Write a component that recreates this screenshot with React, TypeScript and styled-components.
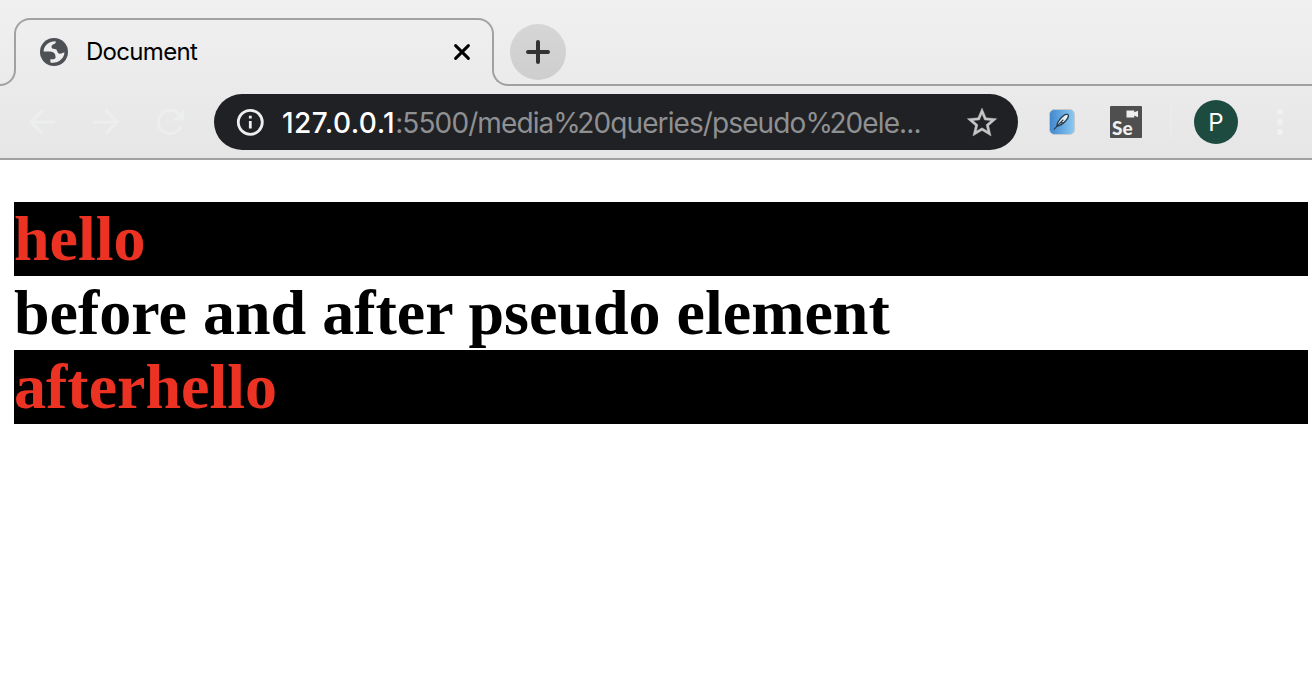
import React from 'react';
import styled, { createGlobalStyle } from 'styled-components';

const line = '#a1a1a1';

const GlobalStyle = createGlobalStyle`
  * { box-sizing: border-box; }
  body { margin: 0; background: #fff; overflow: hidden; }
`;

const Window = styled.div`
  width: 1312px;
  height: 676px;
  background: #fff;
`;

const Chrome = styled.header`
  height: 160px;
  border-bottom: 2px solid ${line};
  background: linear-gradient(#f0f0f0, #e6e6e6);
  font-family: Inter, 'Liberation Sans', sans-serif;
`;

const TabStrip = styled.div`
  display: flex;
  align-items: flex-end;
  height: 86px;
`;

const LeftFoot = styled.div`
  width: 16px;
  height: 34px;
  margin-right: -2px;
  border: solid ${line};
  border-width: 0 2px 2px 0;
  border-bottom-right-radius: 16px;
`;

const Tab = styled.div`
  position: relative;
  display: flex;
  align-items: center;
  width: 480px;
  height: 68px;
  padding: 0 22px 0 26px;
  &::before {
    content: '';
    position: absolute;
    inset: 0 0 34px;
    border: 2px solid ${line};
    border-bottom: 0;
    border-radius: 16px 16px 0 0;
  }
`;

const TabTitle = styled.span`
  flex: 1;
  margin-left: 18px;
  font-size: 24px;
  line-height: 30px;
  letter-spacing: -0.7px;
  color: #000;
`;

const StripRest = styled.div`
  position: relative;
  flex: 1;
  height: 68px;
  margin-left: -2px;
  padding: 6px 0 0 18px;
  &::after {
    content: '';
    position: absolute;
    inset: 34px 0 0;
    border: solid ${line};
    border-width: 0 0 2px 2px;
    border-bottom-left-radius: 16px;
    pointer-events: none;
  }
`;

const NewTab = styled.div`
  display: grid;
  place-items: center;
  width: 56px;
  height: 56px;
  border-radius: 50%;
  background: linear-gradient(#d6d6d6, #cecece);
`;

const Toolbar = styled.div`
  display: flex;
  align-items: center;
  height: 72px;
  padding-left: 28px;
`;

const NavIcons = styled.div`
  display: flex;
  gap: 36px;
  width: 186px;
`;

const Address = styled.div`
  display: flex;
  align-items: center;
  width: 804px;
  height: 56px;
  padding: 0 21px 0 22px;
  border-radius: 28px;
  background: #202124;
`;

const Url = styled.span`
  flex: 1;
  margin-left: 18px;
  padding-top: 1px;
  font-size: 28px;
  line-height: 34px;
  letter-spacing: -0.9px;
  white-space: nowrap;
  color: #8f9092;
`;

const Host = styled.span`
  font-weight: 500;
  letter-spacing: 0.45px;
  color: #fff;
`;

const Percent = styled.span`
  letter-spacing: -3.5px;
`;

const Extensions = styled.div`
  display: flex;
  align-items: center;
  margin-left: 30px;
`;

const SeBadge = styled.div`
  display: flex;
  flex-direction: column;
  width: 32px;
  height: 32px;
  margin-left: 34px;
  padding: 4px 4px 0 2px;
  border-radius: 1px;
  background: #4f4f4f;
  svg { flex: none; align-self: flex-end; }
`;

const SeText = styled.span`
  font: 900 19px/20px Lato, sans-serif;
  color: #f0f0f0;
`;

const Divider = styled.div`
  width: 2px;
  height: 32px;
  margin: 0 22px 0 28px;
  background: #e9ebec;
`;

const Avatar = styled.div`
  display: grid;
  place-items: center;
  width: 44px;
  height: 44px;
  padding-top: 1px;
  border-radius: 50%;
  background: #1e4b40;
  color: #fff;
  font-size: 24px;
  line-height: 43px;
`;

const Dots = styled.div`
  display: grid;
  gap: 4px;
  margin-left: 39px;
`;

const Dot = styled.span`
  width: 6px;
  height: 6px;
  border-radius: 50%;
  background: #eff1f3;
`;

const Page = styled.main`
  padding: 42px 4px 0 14px;
`;

const Heading = styled.h1`
  margin: 0;
  font: bold 64px/74px 'Liberation Serif', 'Times New Roman', serif;
  color: #000;
`;

const Pseudo = styled.span`
  display: block;
  background: #000;
  color: #ec3323;
`;

const Globe = () => (
  <svg width="28" height="28" viewBox="0 0 28 28">
    <circle cx="14" cy="14" r="14" fill="#4d5156" />
    <path
      fill="#eee"
      d="M3.600 13.500C3.800 7.600 8.500 3.400 15.600 3.300c.5 1.700-.4 2.500-2 3-1.700.7-2.300 1.800-2 3.300.5 1.600 2.300 1.500 4.200 1.600 1.300.2 1.400 3.200 3 4.200 1.600.8 3.600-.5 5.600-1.200C24.600 20.500 17.500 26 10.400 24.500v-3.300h3c1.400-.2 2.200-1 2.200-2.300 0-3.300-2-5.200-5.200-5.400z"
    />
  </svg>
);

const Close = () => (
  <svg width="20" height="20" viewBox="0 0 20 20" stroke="#000" strokeWidth="3" strokeLinecap="round">
    <path d="M3.600 3.600l12.800 12.800M16.400 3.600L3.600 16.400" />
  </svg>
);

const Plus = () => (
  <svg width="24" height="24" viewBox="0 0 24 24" stroke="#333" strokeWidth="4" strokeLinecap="round">
    <path d="M12 2v20M2 12h20" />
  </svg>
);

const Arrow = ({ forward }: { forward?: boolean }) => (
  <svg width="28" height="28" viewBox="0 0 28 28" fill="none" stroke="#edefef" strokeWidth="2.6">
    {forward ? <path d="M1 14h24M13.500 2.200L25.300 14 13.500 25.800" /> : <path d="M27 14H3M14.500 2.200L2.700 14l11.800 11.800" />}
  </svg>
);

const Reload = () => (
  <svg width="28" height="28" viewBox="0 0 28 28">
    <path d="M23 6.200A11.800 11.800 0 1 0 25.200 18" fill="none" stroke="#edefef" strokeWidth="2.600" />
    <path d="M28 1v11.500H16.500z" fill="#edefef" />
  </svg>
);

const Info = () => (
  <svg width="28" height="28" viewBox="0 0 28 28">
    <circle cx="14.300" cy="14.300" r="12" fill="none" stroke="#eee" strokeWidth="2.800" />
    <path fill="#eee" d="M12.900 7.800h2.800v2.800h-2.800zM12.900 13h2.800v7.600h-2.800z" />
  </svg>
);

const Star = () => (
  <svg width="30" height="30" viewBox="0 0 24 24">
    <path
      fill="#c6c6c6"
      stroke="#c6c6c6"
      strokeWidth=".25"
      d="M22 9.240l-7.190-.62L12 2 9.190 8.630 2 9.240l5.460 4.730L5.820 21 12 17.270 18.180 21l-1.630-7.030L22 9.240zM12 15.400l-3.760 2.270 1-4.280-3.320-2.880 4.380-.38L12 6.100l1.710 4.040 4.380.38-3.320 2.880 1 4.280L12 15.400z"
      transform="translate(-2.160 -1.570) scale(1.180)"
    />
  </svg>
);

const Feather = () => (
  <svg width="28" height="28" viewBox="0 0 28 28">
    <defs>
      <linearGradient id="sky" x2="1">
        <stop stopColor="#3f87cf" />
        <stop offset="1" stopColor="#8ccaf0" />
      </linearGradient>
    </defs>
    <rect x="1.500" y="1.500" width="25" height="25" rx="5" fill="url(#sky)" stroke="#c4c9cd" />
    <path d="M9 18c-.2-3.600 2-6 5-9 2.200-2.200 4.600-3.500 5.800-2.500 1.300 1.100.4 3.500-1.800 6-2.300 2.500-5.300 5.300-9 5.500z" fill="#e4eff4" stroke="#253c4c" strokeWidth="1.300" />
    <path d="M6.200 21.200L15 12M12.500 15l3.200-.3" fill="none" stroke="#253c4c" strokeWidth="1.100" strokeLinecap="round" />
  </svg>
);

const Camera = () => (
  <svg width="12" height="8" viewBox="0 0 12 8">
    <path fill="#eee" d="M.5.500h7.800v1.800L12 .8v6.400L8.300 5.500v2H.5z" />
  </svg>
);

export default function App() {
  return (
    <Window>
      <GlobalStyle />
      <Chrome>
        <TabStrip>
          <LeftFoot />
          <Tab>
            <Globe />
            <TabTitle>Document</TabTitle>
            <Close />
          </Tab>
          <StripRest>
            <NewTab><Plus /></NewTab>
          </StripRest>
        </TabStrip>
        <Toolbar>
          <NavIcons>
            <Arrow />
            <Arrow forward />
            <Reload />
          </NavIcons>
          <Address>
            <Info />
            <Url>
              <Host>127.0.0.1</Host>:5500/media<Percent>%</Percent>20queries/pseudo<Percent>%</Percent>20ele...
            </Url>
            <Star />
          </Address>
          <Extensions>
            <Feather />
            <SeBadge>
              <Camera />
              <SeText>Se</SeText>
            </SeBadge>
            <Divider />
            <Avatar>P</Avatar>
            <Dots><Dot /><Dot /><Dot /></Dots>
          </Extensions>
        </Toolbar>
      </Chrome>
      <Page>
        <Heading>
          <Pseudo>hello</Pseudo>
          before and after pseudo element
          <Pseudo>afterhello</Pseudo>
        </Heading>
      </Page>
    </Window>
  );
}
